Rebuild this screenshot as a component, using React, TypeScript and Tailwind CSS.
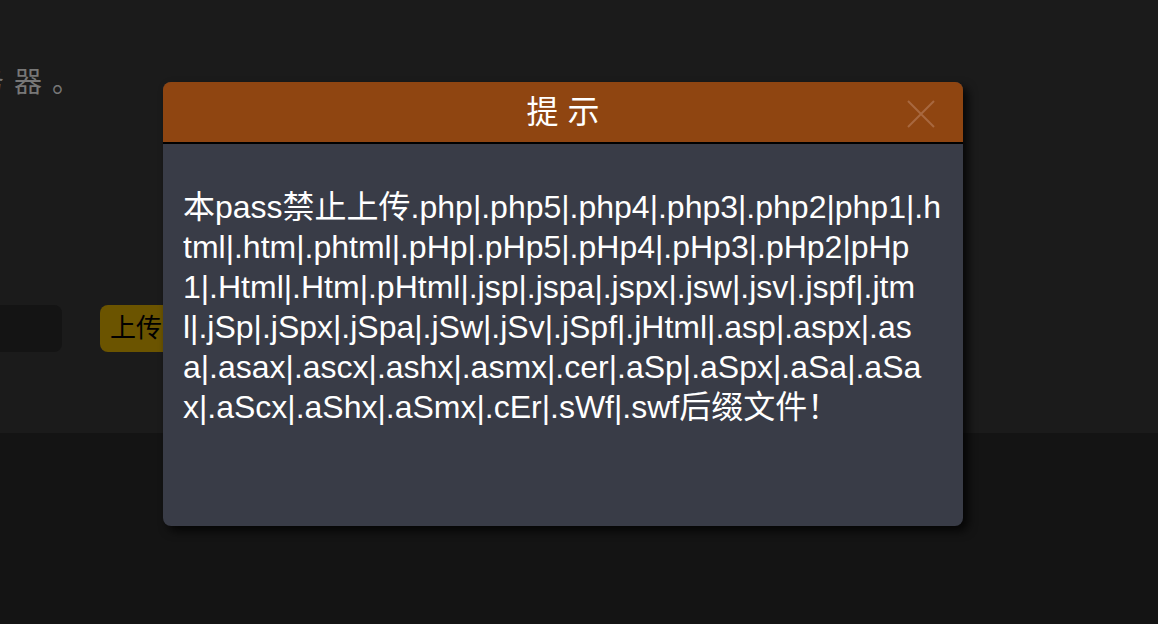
import React from "react"

const lines = [
  "本pass禁止上传.php|.php5|.php4|.php3|.php2|php1|.h",
  "tml|.htm|.phtml|.pHp|.pHp5|.pHp4|.pHp3|.pHp2|pHp",
  "1|.Html|.Htm|.pHtml|.jsp|.jspa|.jspx|.jsw|.jsv|.jspf|.jtm",
  "l|.jSp|.jSpx|.jSpa|.jSw|.jSv|.jSpf|.jHtml|.asp|.aspx|.as",
  "a|.asax|.ascx|.ashx|.asmx|.cer|.aSp|.aSpx|.aSa|.aSa",
  "x|.aScx|.aShx|.aSmx|.cEr|.sWf|.swf后缀文件！",
]

function CloseIcon() {
  return (
    <svg width="28" height="28" viewBox="0 0 28 28" fill="none">
      <path d="M1 1L27 27M27 1L1 27" stroke="#a8683f" strokeWidth="2" />
    </svg>
  )
}

function AlertModal() {
  return (
    <div className="absolute left-[163px] top-[82px] flex h-[444px] w-[800px] flex-col overflow-hidden rounded-lg bg-[#393c47] shadow-[5px_5px_10px_rgba(0,0,0,0.75)]">
      <div className="relative flex h-[62px] shrink-0 items-center justify-center border-b-2 border-black bg-[#8f4511]">
        <span className="text-[32px] leading-none text-white">提 示</span>
        <button className="absolute right-[28px] top-[18px]">
          <CloseIcon />
        </button>
      </div>
      <div className="px-5 pt-[43px] text-[32px] leading-[40px] text-white">
        {lines.map((line) => (
          <div key={line} className="whitespace-nowrap">
            {line}
          </div>
        ))}
      </div>
    </div>
  )
}

export default function App() {
  return (
    <div className="relative h-[624px] w-full overflow-hidden bg-[#141414] font-['Liberation_Sans','Noto_Sans_CJK_SC',sans-serif]">
      <div className="h-[433px] bg-[#1b1b1b]">
        <p className="-ml-[62px] whitespace-nowrap pt-[63px] text-[28px] leading-[40px] tracking-[10px] text-[#777777]">
          服务器。
        </p>
        <div className="mt-[202px] flex items-center gap-[38px]">
          <div className="-ml-[300px] h-[47px] w-[362px] rounded-lg bg-[#141414]" />
          <button className="h-[47px] rounded-lg bg-[#6b5400] pl-[10px] pr-[24px] text-[26px] text-black">
            上传
          </button>
        </div>
      </div>
      <AlertModal />
    </div>
  )
}
